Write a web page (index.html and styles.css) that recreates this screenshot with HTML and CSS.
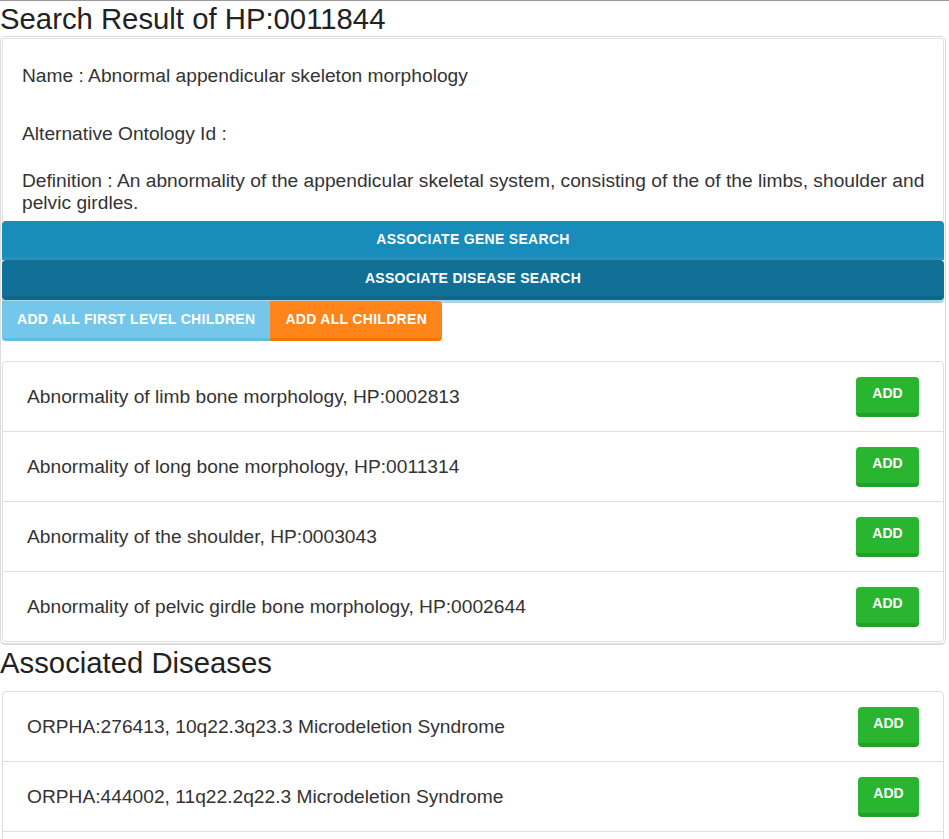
FILE: index.html
```html
<!DOCTYPE html>
<html>
<head>
<meta charset="utf-8">
<title>Search Result of HP:0011844</title>
<link rel="stylesheet" href="styles.css">
</head>
<body>
<div class="page">
  <h2 class="title">Search Result of HP:0011844</h2>
  <div class="result">
    <div class="info">
      <p class="name">Name : Abnormal appendicular skeleton morphology</p>
      <p class="alt">Alternative Ontology Id :</p>
      <p class="def">Definition : An abnormality of the appendicular skeletal system, consisting of the of the limbs, shoulder and pelvic girdles.</p>
    </div>
    <button class="bar gene">ASSOCIATE GENE SEARCH</button>
    <button class="bar disease">ASSOCIATE DISEASE SEARCH</button>
    <div class="add-row">
      <button class="add-first">ADD ALL FIRST LEVEL CHILDREN</button>
      <button class="add-all">ADD ALL CHILDREN</button>
    </div>
    <ul class="list">
      <li class="row"><span class="label">Abnormality of limb bone morphology, HP:0002813</span><button class="add">ADD</button></li>
      <li class="row"><span class="label">Abnormality of long bone morphology, HP:0011314</span><button class="add">ADD</button></li>
      <li class="row"><span class="label">Abnormality of the shoulder, HP:0003043</span><button class="add">ADD</button></li>
      <li class="row"><span class="label">Abnormality of pelvic girdle bone morphology, HP:0002644</span><button class="add">ADD</button></li>
    </ul>
  </div>
  <h2 class="title">Associated Diseases</h2>
  <ul class="list diseases">
    <li class="row"><span class="label">ORPHA:276413, 10q22.3q23.3 Microdeletion Syndrome</span><button class="add">ADD</button></li>
    <li class="row"><span class="label">ORPHA:444002, 11q22.2q22.3 Microdeletion Syndrome</span><button class="add">ADD</button></li>
    <li class="row empty"></li>
  </ul>
</div>
</body>
</html>
```
FILE: styles.css
```css
html, body {
  margin: 0;
  padding: 0;
  background: #fff;
  overflow: hidden;
}
body {
  font-family: "Liberation Sans", Arial, sans-serif;
  color: #333;
}
.page {
  border-top: 1px solid #9a9a9a;
  height: 900px;
}
.title {
  margin: 0;
  font-size: 29.3px;
  font-weight: normal;
  line-height: 35px;
  color: #222;
}
.page > .title:nth-of-type(2) {
  margin-bottom: 11px;
}
.result {
  width: 942px;
  border: 1px solid #dcdcdc;
  border-bottom-width: 2px;
  border-radius: 5px;
  padding: 1px;
}
.info {
  border: 1px solid #e2e2e2;
  border-bottom: none;
  border-radius: 4px 4px 0 0;
  padding: 26px 10px 7px 19px;
  font-size: 19.2px;
  line-height: 22px;
  color: #333;
}
.info p {
  margin: 0;
}
.info .alt {
  margin-top: 36px;
}
.info .def {
  margin-top: 25px;
}
button {
  font-family: "Liberation Sans", Arial, sans-serif;
  font-weight: bold;
  font-size: 14px;
  letter-spacing: 0.3px;
  color: #fff;
  border: none;
  cursor: pointer;
  padding: 0;
}
.bar {
  display: block;
  width: 100%;
  text-align: center;
}
.gene {
  height: 36px;
  padding-bottom: 1px;
  background: #188cbb;
  border-radius: 4px 4px 0 0;
  box-shadow: 0 3px 0 #2a90b8;
}
.disease {
  margin-top: 3px;
  height: 40px;
  background: #117095;
  border-bottom: 4px solid #0e688b;
  border-radius: 4px;
  box-shadow: 0 3px 0 #a9d5e7;
}
.add-row {
  display: flex;
  margin-top: 1px;
}
.add-first,
.add-all {
  height: 40px;
  padding: 0 15px 2px;
}
.add-first {
  background: #74c7ea;
  border-bottom: 3px solid #5dbde3;
  border-radius: 0 0 0 4px;
}
.add-all {
  background: #ff8419;
  border-bottom: 3px solid #f57500;
  border-radius: 0 4px 4px 0;
}
.list {
  list-style: none;
  margin: 20px 0 0;
  padding: 0;
  border: 1px solid #dedede;
  border-radius: 4px;
}
.list.diseases {
  margin: 0 0 0 2px;
  width: 940px;
}
.row {
  display: flex;
  align-items: center;
  justify-content: space-between;
  height: 69px;
  padding: 0 24px 0 24px;
  border-bottom: 1px solid #dedede;
  font-size: 19.2px;
  color: #333;
}
.row:last-child {
  border-bottom: none;
}
.add {
  width: 63px;
  height: 40px;
  padding-bottom: 3px;
  background: #29b52f;
  border-bottom: 4px solid #22a129;
  border-radius: 4px;
  letter-spacing: 0;
}
.diseases .add {
  width: 61px;
}
```
